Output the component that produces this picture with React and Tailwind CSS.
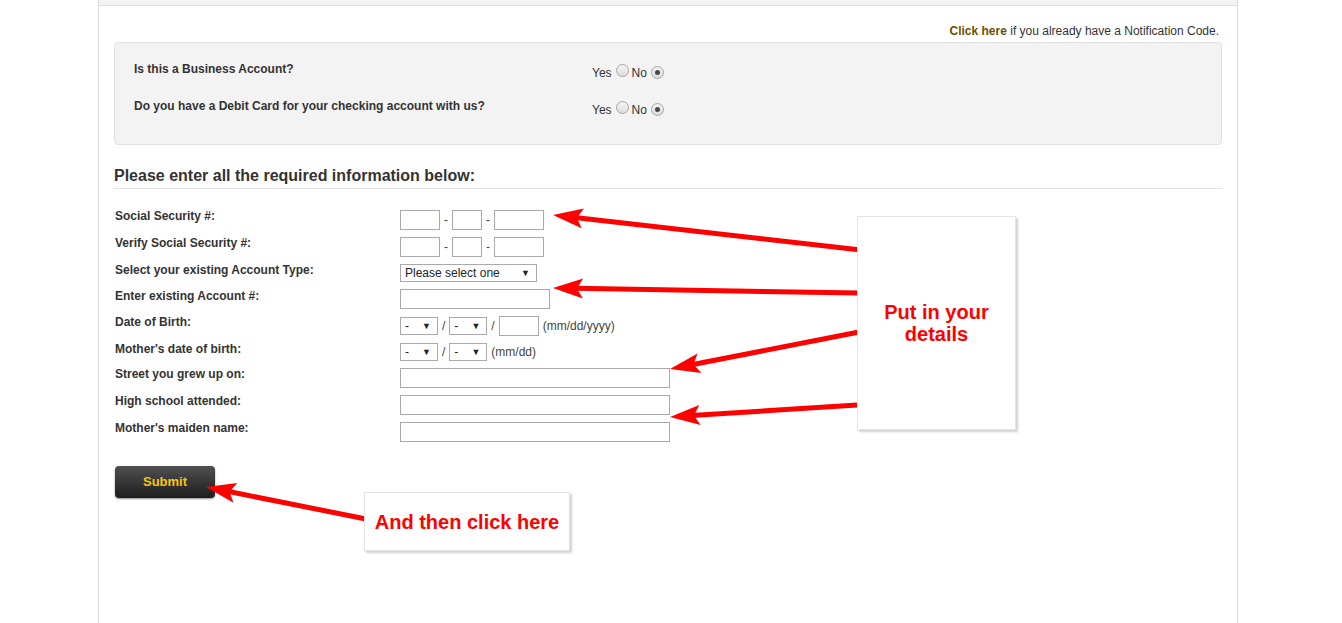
import React from "react";

function Radio({ checked }) {
  return (
    <span className="inline-flex h-[13px] w-[13px] items-center justify-center rounded-full border border-[#a6a6a6] bg-gradient-to-b from-[#f4f4f4] to-[#dcdcdc]">
      {checked && <span className="h-[5px] w-[5px] rounded-full bg-[#4a4a4a]" />}
    </span>
  );
}

function YesNo() {
  return (
    <div className="mt-[1px] flex items-center text-[12px] leading-[14px] text-[#333]">
      <span className="mt-[3px]">Yes</span>
      <span className="ml-[4px]"><Radio /></span>
      <span className="ml-[3px] mt-[3px]">No</span>
      <span className="ml-[4px]"><Radio checked /></span>
    </div>
  );
}

function Input({ w }) {
  return <div className={`h-[20px] border border-[#a9a9a9] bg-white ${w}`} />;
}

function Select({ w, text }) {
  return (
    <div className={`flex h-[18px] items-center justify-between border border-[#a9a9a9] bg-white pl-[4px] pr-[6px] text-[12px] leading-[14px] text-[#222] ${w}`}>
      <span>{text}</span>
      <span className="text-[9px] text-[#222]">▼</span>
    </div>
  );
}

function Row({ label, h, mt, children }) {
  return (
    <div className={`flex ${h}`}>
      <div className="w-[286px] pl-[1px] text-[12px] font-bold leading-[16px] text-[#333]">{label}</div>
      <div className={`flex items-center text-[12px] text-[#444] ${mt}`}>{children}</div>
    </div>
  );
}

function Arrow({ tail, tip }) {
  const dx = tip[0] - tail[0];
  const dy = tip[1] - tail[1];
  const len = Math.hypot(dx, dy);
  const ux = dx / len;
  const uy = dy / len;
  const nx = -uy;
  const ny = ux;
  const hl = 30;
  const hw = 10;
  const bx = tip[0] - ux * hl;
  const by = tip[1] - uy * hl;
  const nbx = bx + ux * 6;
  const nby = by + uy * 6;
  const pts = [
    [tip[0], tip[1]],
    [bx + nx * hw, by + ny * hw],
    [nbx, nby],
    [bx - nx * hw, by - ny * hw],
  ]
    .map((p) => p.join(","))
    .join(" ");
  return (
    <g>
      <line x1={tail[0]} y1={tail[1]} x2={nbx + ux * 2} y2={nby + uy * 2} stroke="#ff0000" strokeWidth="5" />
      <polygon points={pts} fill="#ff0000" />
    </g>
  );
}

export default function App() {
  return (
    <div className="relative h-[623px] w-[1342px] overflow-hidden bg-white font-['Liberation_Sans',Arial,sans-serif] text-[#333]">
      <div className="ml-[98px] h-full w-[1140px] border-x border-[#dddddd]">
        <div className="h-[6px] border-b border-[#dedede] bg-[#f3f3f3]" />
        <div className="px-[15px]">
          <p className="mt-[18px] pr-[3px] text-right text-[12px] leading-[14px] text-[#333]">
            <span className="font-bold text-[#6b4f00]">Click here</span> if you already have a Notification Code.
          </p>
          <div className="mt-[4px] h-[103px] rounded-[4px] border border-[#e2e2e2] bg-[#f3f3f3] pl-[19px] pt-[19px]">
            <div className="flex">
              <div className="w-[458px] text-[12px] font-bold leading-[14px] text-[#333]">Is this a Business Account?</div>
              <YesNo />
            </div>
            <div className="mt-[19px] flex">
              <div className="w-[458px] text-[12px] font-bold leading-[14px] text-[#333]">
                Do you have a Debit Card for your checking account with us?
              </div>
              <YesNo />
            </div>
          </div>
          <h2 className="mt-[22px] border-b border-[#e2e2e2] pb-[3px] text-[16px] font-bold leading-[18px] text-[#333]">
            Please enter all the required information below:
          </h2>
          <div className="mt-[19px]">
            <Row label="Social Security #:" h="h-[27px]" mt="mt-[2px] self-start">
              <Input w="w-[40px]" />
              <span className="mx-[4px]">-</span>
              <Input w="w-[30px]" />
              <span className="mx-[4px]">-</span>
              <Input w="w-[50px]" />
            </Row>
            <Row label="Verify Social Security #:" h="h-[27px]" mt="mt-[2px] self-start">
              <Input w="w-[40px]" />
              <span className="mx-[4px]">-</span>
              <Input w="w-[30px]" />
              <span className="mx-[4px]">-</span>
              <Input w="w-[50px]" />
            </Row>
            <Row label="Select your existing Account Type:" h="h-[26px]" mt="mt-[2px] self-start">
              <Select w="w-[137px]" text="Please select one" />
            </Row>
            <Row label="Enter existing Account #:" h="h-[26px]" mt="mt-[1px] self-start">
              <Input w="w-[150px]" />
            </Row>
            <Row label="Date of Birth:" h="h-[27px]" mt="mt-[2px] self-start">
              <Select w="w-[38px]" text="-" />
              <span className="mx-[4px]">/</span>
              <Select w="w-[38px]" text="-" />
              <span className="mx-[4px]">/</span>
              <Input w="w-[40px]" />
              <span className="ml-[4px]">(mm/dd/yyyy)</span>
            </Row>
            <Row label="Mother's date of birth:" h="h-[25px]" mt="mt-[2px] self-start">
              <Select w="w-[38px]" text="-" />
              <span className="mx-[4px]">/</span>
              <Select w="w-[38px]" text="-" />
              <span className="ml-[4px]">(mm/dd)</span>
            </Row>
            <Row label="Street you grew up on:" h="h-[27px]" mt="mt-[2px] self-start">
              <Input w="w-[270px]" />
            </Row>
            <Row label="High school attended:" h="h-[27px]" mt="mt-[2px] self-start">
              <Input w="w-[270px]" />
            </Row>
            <Row label="Mother's maiden name:" h="h-[27px]" mt="mt-[2px] self-start">
              <Input w="w-[270px]" />
            </Row>
          </div>
          <button className="ml-[1px] mt-[19px] flex h-[32px] w-[100px] items-center justify-center rounded-[4px] bg-gradient-to-b from-[#505050] to-[#1e1e1e] text-[13px] font-bold text-[#f5c70f] shadow-[0_1px_2px_rgba(0,0,0,0.45)]">
            Submit
          </button>
        </div>
      </div>

      <svg className="pointer-events-none absolute left-0 top-0" width="1342" height="623" viewBox="0 0 1342 623">
        <Arrow tail={[861, 250]} tip={[553, 215]} />
        <Arrow tail={[859, 293]} tip={[553, 288]} />
        <Arrow tail={[859, 332]} tip={[670, 369]} />
        <Arrow tail={[857, 405]} tip={[670, 417]} />
        <Arrow tail={[366, 519]} tip={[206, 487]} />
      </svg>

      <div className="absolute left-[857px] top-[216px] flex h-[214px] w-[159px] items-center justify-center border border-[#e4e4e4] bg-white text-center text-[20px] font-bold leading-[22px] text-[#ff0000] shadow-[2px_2px_2px_rgba(0,0,0,0.18)]">
        Put in your
        <br />
        details
      </div>
      <div className="absolute left-[364px] top-[492px] flex h-[59px] w-[206px] items-center justify-center border border-[#e4e4e4] bg-white text-[20px] font-bold leading-[22px] text-[#ff0000] shadow-[2px_2px_2px_rgba(0,0,0,0.18)]">
        And then click here
      </div>
    </div>
  );
}
